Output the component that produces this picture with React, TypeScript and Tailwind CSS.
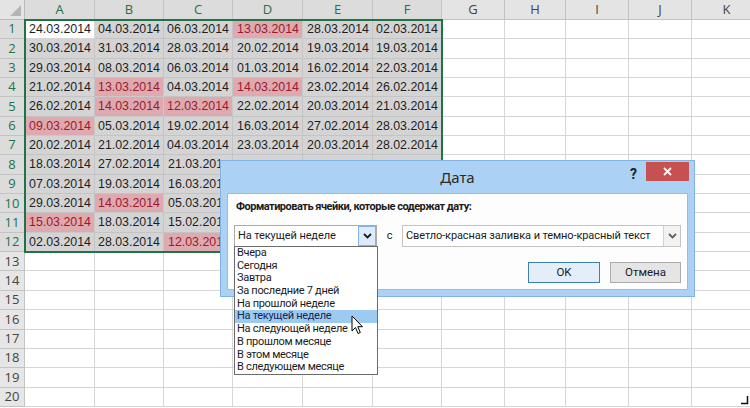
import React from 'react';

const columns = [
  { label: 'A', w: 'w-[70px]', sel: true },
  { label: 'B', w: 'w-[69px]', sel: true },
  { label: 'C', w: 'w-[69px]', sel: true },
  { label: 'D', w: 'w-[70px]', sel: true },
  { label: 'E', w: 'w-[70px]', sel: true },
  { label: 'F', w: 'w-[69px]', sel: true },
  { label: 'G', w: 'w-[63px]', sel: false },
  { label: 'H', w: 'w-[61px]', sel: false },
  { label: 'I', w: 'w-[63px]', sel: false },
  { label: 'J', w: 'w-[63px]', sel: false },
  { label: 'K', w: 'w-[70px]', sel: false }
];

const data = [
  ['24.03.2014', '04.03.2014', '06.03.2014', '13.03.2014', '28.03.2014', '02.03.2014'],
  ['30.03.2014', '31.03.2014', '28.03.2014', '20.02.2014', '19.03.2014', '19.03.2014'],
  ['29.03.2014', '08.03.2014', '06.03.2014', '01.03.2014', '16.02.2014', '22.03.2014'],
  ['21.02.2014', '13.03.2014', '04.03.2014', '14.03.2014', '23.02.2014', '26.02.2014'],
  ['26.02.2014', '14.03.2014', '12.03.2014', '22.02.2014', '20.03.2014', '21.03.2014'],
  ['09.03.2014', '05.03.2014', '19.02.2014', '16.03.2014', '27.02.2014', '28.03.2014'],
  ['20.02.2014', '21.02.2014', '04.03.2014', '23.03.2014', '20.03.2014', '28.02.2014'],
  ['18.03.2014', '27.02.2014', '21.03.2014', '', '', ''],
  ['07.03.2014', '19.03.2014', '16.03.2014', '', '', ''],
  ['29.03.2014', '14.03.2014', '05.03.2014', '', '', ''],
  ['15.03.2014', '18.03.2014', '15.02.2014', '', '', ''],
  ['02.03.2014', '28.03.2014', '12.03.2014', '', '', '']
];

// cells highlighted by the rule (row-col)
const red = new Set(['0-3', '3-1', '3-3', '4-1', '4-2', '5-0', '9-1', '10-0', '11-2']);

const options = [
  'Вчера',
  'Сегодня',
  'Завтра',
  'За последние 7 дней',
  'На прошлой неделе',
  'На текущей неделе',
  'На следующей неделе',
  'В прошлом месяце',
  'В этом месяце',
  'В следующем месяце'
];

function Chevron({ color }: { color: string }) {
  return (
    <svg width="9" height="6" viewBox="0 0 9 6">
      <path d="M1 1 L4.5 4.5 L8 1" fill="none" stroke={color} strokeWidth="1.8" />
    </svg>
  );
}

function Cell({ r, c }: { r: number; c: number }) {
  const col = columns[c];
  const inSel = r < 12 && c < 6;
  const active = r === 0 && c === 0;
  const isRed = red.has(`${r}-${c}`);
  // column C below row 7 is cut off by the dialog
  const clipped = inSel && r >= 7 && c === 2;
  let bg = 'bg-white border-[#d6d6d6]';
  if (inSel) bg = isRed ? 'bg-[#dea9af] border-[#c9c9c9]' : 'bg-[#d4d4d4] border-[#c4c4c4]';
  if (active) bg = 'bg-white border-[#d6d6d6]';
  const color = isRed ? 'text-[#9a1b2c]' : 'text-[#1e1e1e]';
  if (clipped) {
    return (
      <div className={`${col.w} shrink-0 h-full border-r border-b ${bg} flex items-center pl-[4px] ${color}`}>
        <span className="w-[52px] overflow-hidden whitespace-nowrap">{data[r][c]}</span>
      </div>
    );
  }
  return (
    <div className={`${col.w} shrink-0 h-full border-r border-b ${bg} flex items-center justify-end pr-[3px] ${color}`}>
      {inSel ? data[r][c] : ''}
    </div>
  );
}

export default function App() {
  const rows = Array.from({ length: 20 }, (_, i) => i);
  return (
    <div className="relative w-[750px] h-[408px] overflow-hidden bg-white font-['Liberation_Sans',sans-serif]">
      {/* column headers */}
      <div className="flex h-[20px] bg-[#e4e4e4]">
        <div className="w-[25px] shrink-0 h-full border-r border-b border-[#b9b9b9] flex items-end justify-end p-[3px]">
          <svg width="11" height="11" viewBox="0 0 11 11">
            <path d="M11 0 L11 11 L0 11 Z" fill="#b5b5b5" />
          </svg>
        </div>
        {columns.map(col => (
          <div
            key={col.label}
            className={`${col.w} shrink-0 h-full border-r border-b border-[#c3c3c3] flex items-center justify-center font-['Open_Sans',sans-serif] text-[13px] ${
              col.sel ? 'text-[#217346] bg-[#dcdcdc] border-b-[#217346]' : 'text-[#444]'
            }`}
          >
            {col.label}
          </div>
        ))}
      </div>

      {/* rows */}
      <div className="text-[12.4px]">
        {rows.map(r => (
          <div key={r} className="flex h-[19.35px]">
            <div
              className={`w-[25px] shrink-0 h-full border-r border-b border-[#c3c3c3] flex items-center justify-center font-['Open_Sans',sans-serif] text-[13px] ${
                r < 12 ? 'bg-[#dcdcdc] text-[#217346]' : 'bg-[#e6e6e6] text-[#444]'
              }`}
            >
              {r + 1}
            </div>
            {columns.map((_, c) => (
              <Cell key={c} r={r} c={c} />
            ))}
          </div>
        ))}
      </div>

      {/* selection outline */}
      <div className="absolute left-[24px] top-[19px] w-[419px] h-[234px] border-2 border-[#217346]" />

      {/* dialog */}
      <div className="absolute left-[220px] top-[160px] w-[475px] h-[137px] bg-[#abd1f4] border border-[#82b3e2] flex flex-col font-['Roboto',sans-serif]">
        <div className="relative h-[32px] shrink-0 flex items-center justify-center">
          <span className="text-[15px] text-[#2b2b2b] pt-[1px] font-['Noto_Sans',sans-serif]">Дата</span>
          <span className="absolute left-[409px] top-[3px] text-[14px] font-bold text-[#222]">?</span>
          <div className="absolute right-[5px] top-[1px] w-[43px] h-[19px] bg-[#c75050] flex items-center justify-center">
            <svg width="9" height="9" viewBox="0 0 9 9">
              <path d="M1 1 L8 8 M8 1 L1 8" stroke="#fff" strokeWidth="1.8" />
            </svg>
          </div>
        </div>

        <div className="mx-[6px] h-[97px] bg-[#fdfdfd] border border-[#93bde4] flex flex-col">
          <div className="pl-[8px] pt-[6px] h-[20px] leading-[14px] text-[11px] font-bold text-[#1b1b1b] tracking-[-0.5px]">
            Форматировать ячейки, которые содержат дату:
          </div>

          <div className="mt-[11px] flex items-center pl-[6px] h-[22px] text-[11px] tracking-[-0.1px] text-[#1b1b1b]">
            <div className="w-[143px] h-full border border-[#acacac] bg-white flex items-center">
              <span className="flex-1 pl-[3px]">На текущей неделе</span>
              <div className="w-[18px] h-full bg-[#dcecfc] border border-[#7eb4ea] flex items-center justify-center">
                <Chevron color="#1a1a1a" />
              </div>
            </div>
            <div className="w-[25px] text-center">с</div>
            <div className="w-[279px] h-full border border-[#c4c4c4] bg-white flex items-center">
              <span className="flex-1 pl-[3px] whitespace-nowrap">Светло-красная заливка и темно-красный текст</span>
              <div className="w-[17px] h-full bg-[#f2f2f2] border-l border-[#d2d2d2] flex items-center justify-center">
                <Chevron color="#606060" />
              </div>
            </div>
          </div>

          <div className="mt-[15px] flex justify-end gap-[10px] pr-[6px] text-[11.5px] text-[#1b1b1b]">
            <div className="w-[72px] h-[21px] border border-[#3c7fb1] bg-[#e4eef8] flex items-center justify-center">
              OK
            </div>
            <div className="w-[71px] h-[21px] border border-[#adadad] bg-[#e5e5e5] flex items-center justify-center">
              Отмена
            </div>
          </div>
        </div>
      </div>

      {/* opened combo list */}
      <div className="absolute left-[234px] top-[246px] w-[144px] h-[129px] bg-white border border-[#6b6b6b] font-['Roboto',sans-serif] text-[11px] tracking-[-0.3px] text-[#1b1b1b]">
        {options.map((opt, i) => (
          <div
            key={opt}
            className={`h-[12.7px] leading-[12.7px] pl-[2px] whitespace-nowrap ${
              i === 5 ? 'bg-[#9dcaf1] text-[#10285a]' : ''
            }`}
          >
            {opt}
          </div>
        ))}
      </div>

      {/* mouse pointer */}
      <svg className="absolute left-[351px] top-[315px]" width="13" height="21" viewBox="0 0 13 21">
        <path
          d="M1 1 L1 16 L4.5 12.5 L7 18.5 L9.3 17.5 L6.8 11.7 L11.5 11.7 Z"
          fill="#fff"
          stroke="#000"
          strokeWidth="1"
          strokeLinejoin="round"
        />
      </svg>

      {/* corner mark */}
      <svg className="absolute left-[741px] top-[396px]" width="8" height="9" viewBox="0 0 8 9">
        <path d="M6.5 0 L6.5 7.5 L0 7.5" fill="none" stroke="#111" strokeWidth="1.5" />
      </svg>
    </div>
  );
}
